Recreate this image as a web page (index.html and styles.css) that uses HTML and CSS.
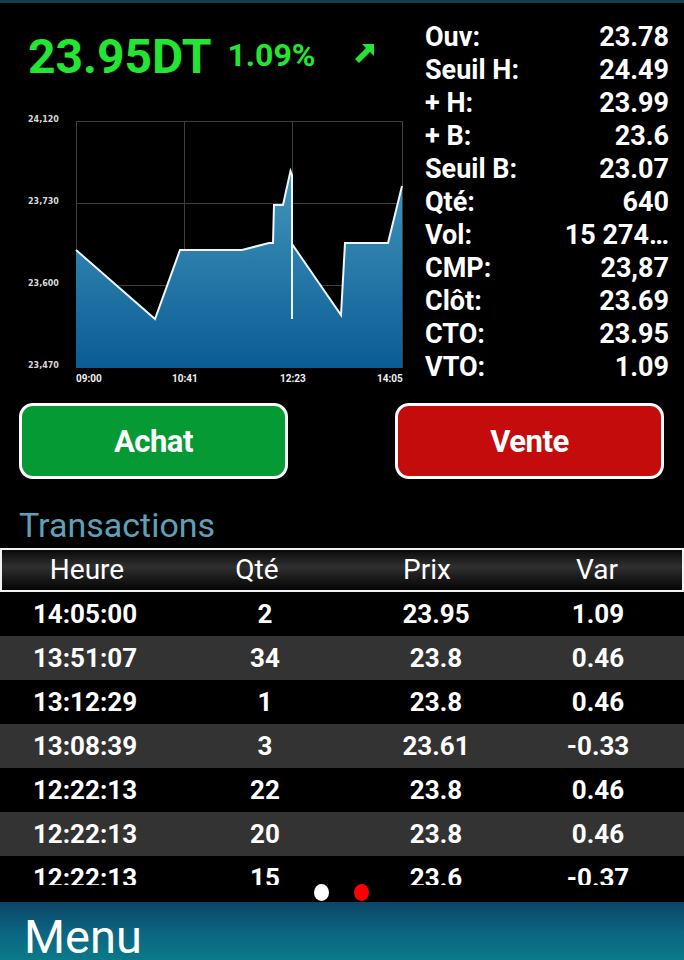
FILE: index.html
```html
<!DOCTYPE html>
<html lang="fr">
<head>
<meta charset="utf-8">
<title>Cotation</title>
<link rel="stylesheet" href="styles.css">
</head>
<body>
<div class="screen">
  <div class="topline"></div>
  <div class="top">
    <div class="left">
      <div class="price-row">
        <span class="price">23.95DT</span>
        <span class="pct">1.09%</span>
        <svg class="arrow" width="21" height="21" viewBox="0 0 21 21"><path d="M8 1 H20 V13 L16 9 L5 20 L1 16 L12 5 Z" fill="#22e632"/></svg>
      </div>
      <svg class="chart" width="415" height="290" viewBox="0 100 415 290">
        <defs>
          <linearGradient id="fillg" gradientUnits="userSpaceOnUse" x1="0" y1="171" x2="0" y2="368">
            <stop offset="0" stop-color="#4497ba"/>
            <stop offset="1" stop-color="#0a5c96"/>
          </linearGradient>
        </defs>
        <g stroke="#3e3e3e" stroke-width="1">
          <line x1="76" y1="121.5" x2="402" y2="121.5"/>
          <line x1="76" y1="203.5" x2="402" y2="203.5"/>
          <line x1="76" y1="285.5" x2="402" y2="285.5"/>
          <line x1="76.5" y1="121" x2="76.5" y2="368"/>
          <line x1="184.5" y1="121" x2="184.5" y2="368"/>
          <line x1="292.5" y1="121" x2="292.5" y2="368"/>
          <line x1="402.5" y1="121" x2="402.5" y2="368"/>
        </g>
        <path d="M76,250 L155,319 L180,250 L242,250 L269,243 L273,243 L274,205 L283,205 L290.5,171 L292,175 L292,319 L292,244 L341,315 L345,243 L388,243 L402,186 L402,368 L76,368 Z" fill="url(#fillg)"/>
        <path d="M76,250 L155,319 L180,250 L242,250 L269,243 L273,243 L274,205 L283,205 L290.5,171 L292,175 L292,319 L292,244 L341,315 L345,243 L388,243 L402,186" fill="none" stroke="#eef6fb" stroke-width="2" stroke-linejoin="miter"/>
        <g class="ylab">
          <text x="28" y="122">24,120</text>
          <text x="28" y="204">23,730</text>
          <text x="28" y="286">23,600</text>
          <text x="28" y="368">23,470</text>
        </g>
        <g class="xlab">
          <text x="76" y="382">09:00</text>
          <text x="172" y="382">10:41</text>
          <text x="280" y="382">12:23</text>
          <text x="377" y="382">14:05</text>
        </g>
      </svg>
    </div>
    <div class="stats">
      <div class="stat"><span>Ouv:</span><span>23.78</span></div>
      <div class="stat"><span>Seuil H:</span><span>24.49</span></div>
      <div class="stat"><span>+ H:</span><span>23.99</span></div>
      <div class="stat"><span>+ B:</span><span>23.6</span></div>
      <div class="stat"><span>Seuil B:</span><span>23.07</span></div>
      <div class="stat"><span>Qté:</span><span>640</span></div>
      <div class="stat"><span>Vol:</span><span>15 274…</span></div>
      <div class="stat"><span>CMP:</span><span>23,87</span></div>
      <div class="stat"><span>Clôt:</span><span>23.69</span></div>
      <div class="stat"><span>CTO:</span><span>23.95</span></div>
      <div class="stat"><span>VTO:</span><span>1.09</span></div>
    </div>
  </div>
  <div class="buttons">
    <div class="btn buy">Achat</div>
    <div class="btn sell">Vente</div>
  </div>
  <div class="title">Transactions</div>
  <div class="thead">
    <span>Heure</span><span>Qté</span><span>Prix</span><span>Var</span>
  </div>
  <div class="list">
    <div class="row"><span>14:05:00</span><span>2</span><span>23.95</span><span>1.09</span></div>
    <div class="row alt"><span>13:51:07</span><span>34</span><span>23.8</span><span>0.46</span></div>
    <div class="row"><span>13:12:29</span><span>1</span><span>23.8</span><span>0.46</span></div>
    <div class="row alt"><span>13:08:39</span><span>3</span><span>23.61</span><span>-0.33</span></div>
    <div class="row"><span>12:22:13</span><span>22</span><span>23.8</span><span>0.46</span></div>
    <div class="row alt"><span>12:22:13</span><span>20</span><span>23.8</span><span>0.46</span></div>
    <div class="row"><span>12:22:13</span><span>15</span><span>23.6</span><span>-0.37</span></div>
  </div>
  <div class="pager">
    <span class="dot white"></span>
    <span class="dot red"></span>
  </div>
  <div class="menu">Menu</div>
</div>
</body>
</html>
```
FILE: styles.css
```css
* { box-sizing: border-box; }
html, body { margin: 0; padding: 0; background: #000; }
body { font-family: Roboto, "Noto Sans", sans-serif; color: #fff; }
.screen { width: 684px; height: 960px; overflow: hidden; background: #000; display: flex; flex-direction: column; }
.topline { height: 3px; background: #173c52; flex: none; }

.top { display: flex; height: 390px; flex: none; }
.left { width: 415px; flex: none; }
.price-row { display: flex; align-items: flex-start; padding: 30px 0 0 28px; height: 78px; }
.price { font-size: 48px; line-height: 48px; font-weight: 700; color: #22e632; }
.pct { font-size: 32px; line-height: 32px; font-weight: 700; color: #22e632; margin: 6px 0 0 16px; }
.arrow { margin: 10px 0 0 39px; }
.chart { display: block; margin-top: 19px; }
.ylab text { font-family: "DejaVu Sans", sans-serif; font-size: 8px; font-weight: 700; fill: #d8d8d8; }
.xlab text { font-family: Roboto, sans-serif; font-size: 10px; font-weight: 700; fill: #f0f0f0; }

.stats { flex: 1; padding: 18px 15px 0 10px; }
.stat { display: flex; justify-content: space-between; font-size: 27px; line-height: 33px; font-weight: 700; }

.buttons { display: flex; justify-content: space-between; padding: 0 20px 0 19px; margin-top: 10px; flex: none; }
.btn { width: 269px; height: 76px; border: 3px solid #fff; border-radius: 14px; display: flex; align-items: center; justify-content: center; font-size: 31px; font-weight: 700; color: #fff; letter-spacing: -0.5px; }
.buy { background: #069a34; }
.sell { background: #c40c0c; }

.title { margin-top: 26px; height: 40px; line-height: 40px; padding-left: 19px; font-size: 34px; color: #5fa0b8; flex: none; }
.thead { margin-top: 3px; height: 44px; border: 2px solid #f2f2f2; background: linear-gradient(#0a0a0a 0%, #303030 42%, #1a1a1a 70%, #060606 100%); display: grid; grid-template-columns: repeat(4, 1fr); padding-top: 2px; flex: none; }
.thead span { text-align: center; font-size: 28px; line-height: 36px; color: #fff; }

.list { height: 293px; overflow: hidden; flex: none; }
.row { display: grid; grid-template-columns: 170px 190px 152px 172px; height: 44px; padding-top: 1px; background: #000; }
.row.alt { background: #333; }
.row span { text-align: center; font-size: 26px; line-height: 43px; font-weight: 700; color: #fff; }

.pager { height: 17px; display: flex; justify-content: center; align-items: flex-end; gap: 25px; flex: none; }
.dot { width: 15px; height: 17px; border-radius: 50%; margin-bottom: 1px; }
.dot.white { background: #fff; margin-left: -1px; }
.dot.red { background: #f00; }

.menu { height: 58px; flex: none; overflow: hidden; padding: 6px 0 0 24px; font-size: 47px; line-height: 58px; color: #fff; background: linear-gradient(180deg, #0c4466 0%, #0b6480 50%, #0a7a89 100%); }
```
